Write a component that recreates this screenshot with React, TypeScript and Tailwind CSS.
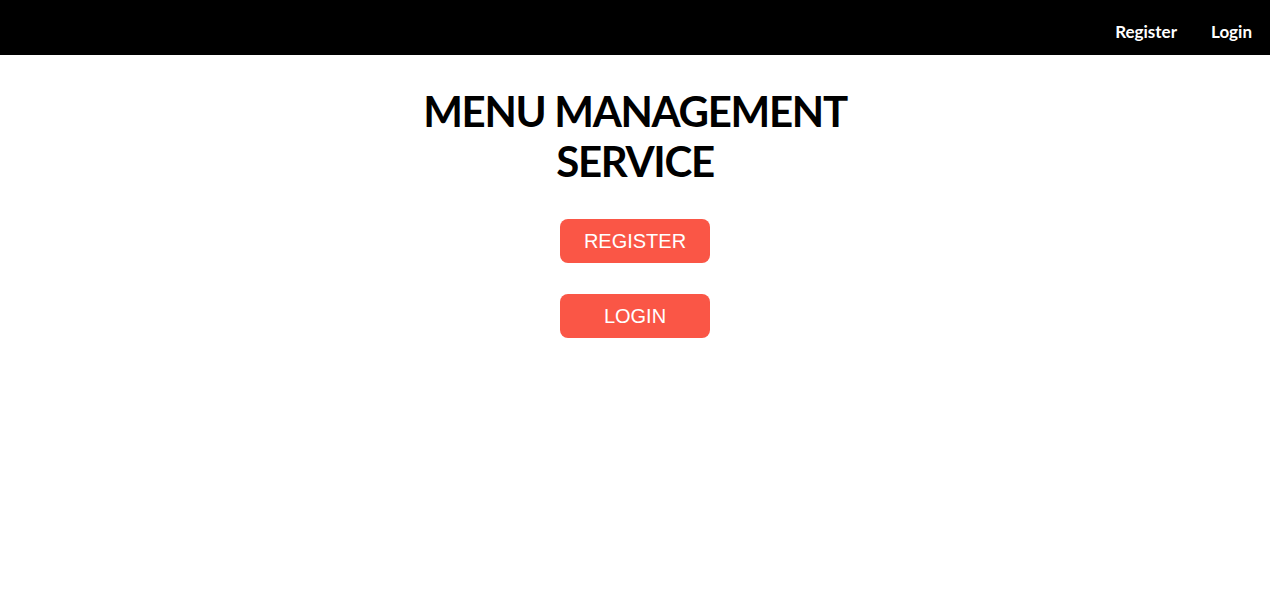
export default function App() {
  return (
    <div className="min-h-screen bg-white">
      <nav className="h-[55px] bg-black flex items-center justify-end pr-[18px] gap-[34px] pt-[9px]">
        <a className="text-white font-bold text-[17px] font-['Lato','Liberation_Sans',sans-serif]">Register</a>
        <a className="text-white font-bold text-[17px] font-['Lato','Liberation_Sans',sans-serif]">Login</a>
      </nav>
      <div className="flex flex-col items-center">
        <h1 className="mt-[31px] w-[460px] text-center text-[42px] leading-[50px] tracking-[-1.3px] font-bold text-black font-['Lato','Liberation_Sans',sans-serif]">
          MENU MANAGEMENT SERVICE
        </h1>
        <button className="mt-[33px] w-[150px] h-[44px] rounded-[8px] bg-[#fa5646] text-white text-[20px] font-['Liberation_Sans',Arial,sans-serif]">
          REGISTER
        </button>
        <button className="mt-[31px] w-[150px] h-[44px] rounded-[8px] bg-[#fa5646] text-white text-[20px] font-['Liberation_Sans',Arial,sans-serif]">
          LOGIN
        </button>
      </div>
    </div>
  );
}
